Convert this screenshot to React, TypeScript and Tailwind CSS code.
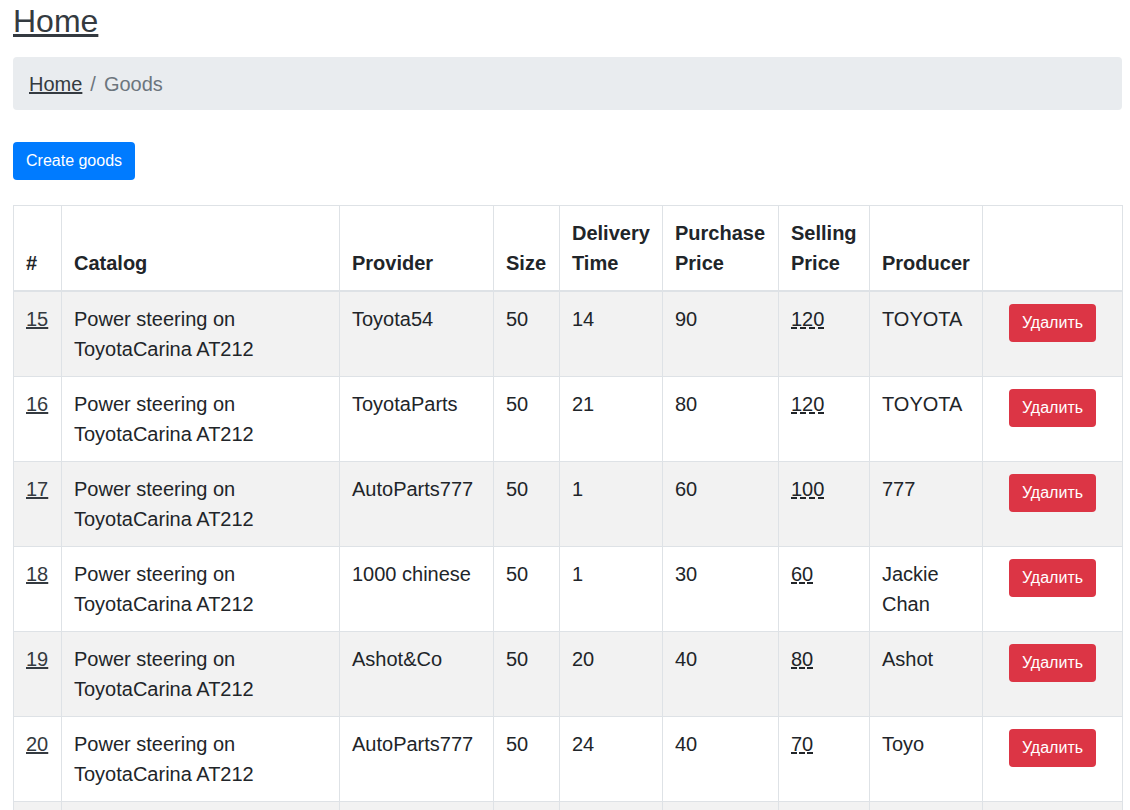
import React from "react";

type Row = {
  id: number;
  catalog: string;
  provider: string;
  size: number;
  delivery: number;
  purchase: number;
  selling: number;
  producer: string;
};

const ROWS: Row[] = [
  { id: 15, catalog: "Power steering on ToyotaCarina AT212", provider: "Toyota54", size: 50, delivery: 14, purchase: 90, selling: 120, producer: "TOYOTA" },
  { id: 16, catalog: "Power steering on ToyotaCarina AT212", provider: "ToyotaParts", size: 50, delivery: 21, purchase: 80, selling: 120, producer: "TOYOTA" },
  { id: 17, catalog: "Power steering on ToyotaCarina AT212", provider: "AutoParts777", size: 50, delivery: 1, purchase: 60, selling: 100, producer: "777" },
  { id: 18, catalog: "Power steering on ToyotaCarina AT212", provider: "1000 chinese", size: 50, delivery: 1, purchase: 30, selling: 60, producer: "Jackie Chan" },
  { id: 19, catalog: "Power steering on ToyotaCarina AT212", provider: "Ashot&Co", size: 50, delivery: 20, purchase: 40, selling: 80, producer: "Ashot" },
  { id: 20, catalog: "Power steering on ToyotaCarina AT212", provider: "AutoParts777", size: 50, delivery: 24, purchase: 40, selling: 70, producer: "Toyo" },
  { id: 21, catalog: "Power steering on ToyotaCarina AT212", provider: "Toyota54", size: 50, delivery: 7, purchase: 50, selling: 90, producer: "TOYOTA" },
];

const HEADERS = ["#", "Catalog", "Provider", "Size", "Delivery Time", "Purchase Price", "Selling Price", "Producer", ""];
const WIDTHS = [48, 278, 154, 66, 103, 116, 91, 113, 140];

export default function App() {
  return (
    <div className="min-h-screen bg-white text-[#212529] font-['Liberation_Sans',Arial,sans-serif] pl-[13px] pb-6">
      <div className="w-[1109px]">
        {/* Title */}
        <h1 className="text-[32px] leading-[42px] font-normal">
          <a href="#" className="underline text-[#343a40]">Home</a>
        </h1>

        {/* Breadcrumb */}
        <nav className="mt-[15px] h-[53px] bg-[#e9ecef] rounded px-4 flex items-center text-[20px] leading-[30px]">
          <a href="#" className="underline text-[#343a40]">Home</a>
          <span className="px-2 text-[#6c757d]">/</span>
          <span className="text-[#6c757d]">Goods</span>
        </nav>

        {/* Actions */}
        <div className="mt-8">
          <button type="button" className="h-[38px] px-[13px] rounded bg-[#007bff] text-white text-base leading-6">
            Create goods
          </button>
        </div>

        {/* Table */}
        <table className="mt-[25px] w-[1109px] table-fixed border-collapse text-[20px] leading-[30px]">
          <colgroup>
            {WIDTHS.map((w, i) => (
              <col key={i} style={{ width: w }} />
            ))}
          </colgroup>
          <thead>
            <tr>
              {HEADERS.map((h, i) => (
                <th
                  key={i}
                  className="border border-[#dee2e6] border-b-2 px-3 py-3 text-left align-bottom font-bold"
                >
                  {h}
                </th>
              ))}
            </tr>
          </thead>
          <tbody>
            {ROWS.map((r, idx) => (
              <tr key={r.id} className={idx % 2 === 0 ? "bg-[#f2f2f2]" : "bg-white"}>
                <td className="border border-[#dee2e6] px-3 py-3 align-top">
                  <a href="#" className="underline text-[#343a40]">{r.id}</a>
                </td>
                <td className="border border-[#dee2e6] px-3 py-3 align-top">{r.catalog}</td>
                <td className="border border-[#dee2e6] px-3 py-3 align-top">{r.provider}</td>
                <td className="border border-[#dee2e6] px-3 py-3 align-top">{r.size}</td>
                <td className="border border-[#dee2e6] px-3 py-3 align-top">{r.delivery}</td>
                <td className="border border-[#dee2e6] px-3 py-3 align-top">{r.purchase}</td>
                <td className="border border-[#dee2e6] px-3 py-3 align-top">
                  <abbr title="Selling price" className="underline decoration-dashed">{r.selling}</abbr>
                </td>
                <td className="border border-[#dee2e6] px-3 py-3 align-top">{r.producer}</td>
                <td className="border border-[#dee2e6] px-3 py-3 align-top text-center">
                  <button type="button" className="h-[38px] px-[13px] rounded bg-[#dc3545] text-white text-base leading-6">
                    Удалить
                  </button>
                </td>
              </tr>
            ))}
          </tbody>
        </table>
      </div>
    </div>
  );
}
